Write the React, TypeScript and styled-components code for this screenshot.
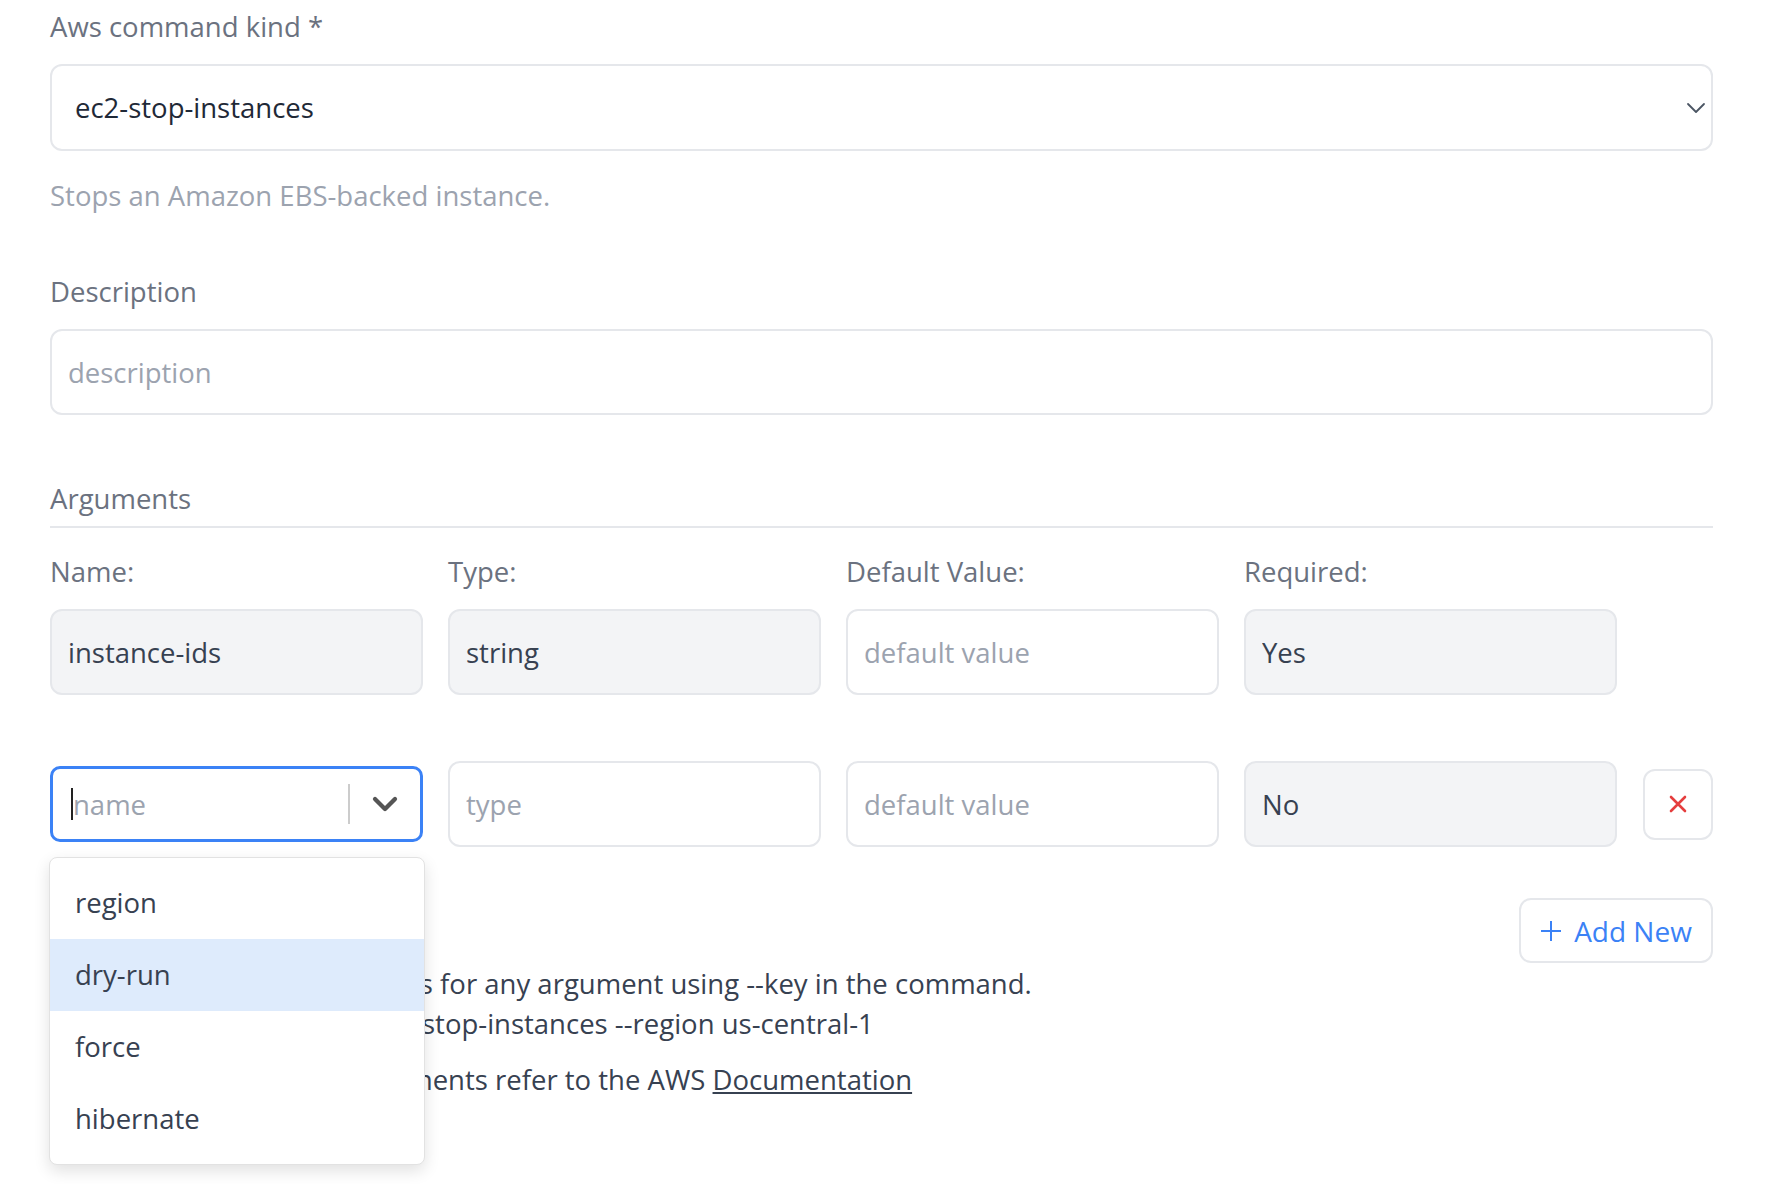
import React from "react";
import styled, { createGlobalStyle } from "styled-components";

const GlobalStyle = createGlobalStyle`
  html, body {
    margin: 0;
    background: #ffffff;
    font-family: "Open Sans", Lato, sans-serif;
  }
`;

const Page = styled.div`
  width: 1713px;
  min-height: 1184px;
  box-sizing: border-box;
  padding: 9px 0 0 50px;
  color: #374151;
  font-size: 27.5px;
`;

const Label = styled.div`
  height: 36px;
  line-height: 36px;
  color: #6b7280;
  font-size: 27.5px;
`;

const Field = styled.div`
  display: flex;
  flex-direction: column;
  gap: 19px;
`;

const SelectBox = styled.div`
  height: 87px;
  box-sizing: border-box;
  border: 2px solid #e5e7eb;
  border-radius: 12px;
  display: flex;
  align-items: center;
  justify-content: space-between;
  padding: 0 3px 0 23px;
  color: #1f2937;
`;

const Hint = styled.div`
  margin-top: 27px;
  height: 36px;
  line-height: 36px;
  color: #9ca3af;
`;

const TextInput = styled.input<{ $disabled?: boolean }>`
  width: 100%;
  height: 86px;
  box-sizing: border-box;
  border: 2px solid #e5e7eb;
  border-radius: 12px;
  padding: 0 16px;
  font-family: inherit;
  font-size: 27.5px;
  color: #374151;
  background: ${({ $disabled }) => ($disabled ? "#f3f4f6" : "#ffffff")};
  outline: none;
  &::placeholder {
    color: #9ca3af;
  }
`;

const Section = styled.div<{ $top?: number }>`
  margin-top: ${({ $top }) => $top ?? 60}px;
`;

const SectionHead = styled.div`
  height: 36px;
  line-height: 36px;
  color: #6b7280;
  padding-bottom: 9px;
  border-bottom: 2px solid #e5e7eb;
`;

const ArgGrid = styled.div`
  margin-top: 26px;
  display: grid;
  grid-template-columns: repeat(4, 373px) 1fr;
  column-gap: 25px;
  row-gap: 19px;
  align-items: center;
`;

const RowGap = styled.div`
  grid-column: 1 / -1;
  height: 28px;
`;

const NameCell = styled.div`
  position: relative;
  height: 86px;
  display: flex;
  align-items: center;
`;

const NameSelect = styled.div`
  width: 100%;
  height: 76px;
  box-sizing: border-box;
  border: 3px solid #3b82f6;
  border-radius: 10px;
  display: flex;
  align-items: center;
  padding-left: 18px;
`;

const Caret = styled.span`
  width: 2px;
  height: 32px;
  background: #222;
`;

const Placeholder = styled.span`
  flex: 1;
  color: #9ca3af;
`;

const Divider = styled.span`
  width: 2px;
  height: 40px;
  background: #cccccc;
`;

const Indicator = styled.span`
  width: 70px;
  display: flex;
  justify-content: center;
  align-items: center;
`;

const Menu = styled.div`
  position: absolute;
  top: 96px;
  left: -1px;
  width: 376px;
  box-sizing: border-box;
  padding: 9px 0;
  background: #ffffff;
  border: 1px solid #e2e2e2;
  border-radius: 8px;
  box-shadow: 0 6px 16px rgba(0, 0, 0, 0.12);
  z-index: 5;
`;

const MenuItem = styled.div<{ $active?: boolean }>`
  height: 72px;
  line-height: 72px;
  padding-left: 25px;
  color: #374151;
  background: ${({ $active }) => ($active ? "#deebfc" : "transparent")};
`;

const DeleteButton = styled.button`
  justify-self: end;
  width: 70px;
  height: 71px;
  box-sizing: border-box;
  border: 2px solid #e5e7eb;
  border-radius: 12px;
  background: #ffffff;
  display: flex;
  align-items: center;
  justify-content: center;
  padding: 0;
`;

const Actions = styled.div`
  margin-top: 51px;
  display: flex;
  justify-content: flex-end;
`;

const AddButton = styled.button`
  height: 65px;
  width: 194px;
  box-sizing: border-box;
  border: 2px solid #e5e7eb;
  border-radius: 12px;
  background: #ffffff;
  color: #3b82f6;
  font-family: inherit;
  font-size: 28px;
  display: flex;
  align-items: center;
  justify-content: center;
  gap: 12px;
`;

const Notes = styled.div`
  margin-top: 1px;
  line-height: 40px;
  color: #374151;
  white-space: nowrap;
  p {
    margin: 0 0 16px;
  }
  a {
    color: #374151;
    text-decoration: underline;
  }
`;

const Chevron = ({ size, stroke, color }: { size: number; stroke: number; color: string }) => (
  <svg width={size} height={size} viewBox="0 0 24 24" fill="none">
    <path d="M4 8l8 8 8-8" stroke={color} strokeWidth={stroke} strokeLinecap="round" strokeLinejoin="round" />
  </svg>
);

const App = () => {
  return (
    <Page>
      <GlobalStyle />
      <Field>
        <Label>Aws command kind *</Label>
        <SelectBox>
          <span>ec2-stop-instances</span>
          <Chevron size={24} stroke={1.8} color="#4b5563" />
        </SelectBox>
      </Field>
      <Hint>Stops an Amazon EBS-backed instance.</Hint>

      <Section>
        <Field>
          <Label>Description</Label>
          <TextInput placeholder="description" readOnly />
        </Field>
      </Section>

      <Section $top={66}>
        <SectionHead>Arguments</SectionHead>
        <ArgGrid>
          <Label>Name:</Label>
          <Label>Type:</Label>
          <Label>Default Value:</Label>
          <Label>Required:</Label>
          <span />

          <TextInput $disabled value="instance-ids" readOnly />
          <TextInput $disabled value="string" readOnly />
          <TextInput placeholder="default value" readOnly />
          <TextInput $disabled value="Yes" readOnly />
          <span />

          <RowGap />

          <NameCell>
            <NameSelect>
              <Caret />
              <Placeholder>name</Placeholder>
              <Divider />
              <Indicator>
                <Chevron size={30} stroke={3.4} color="#555555" />
              </Indicator>
            </NameSelect>
            <Menu>
              <MenuItem>region</MenuItem>
              <MenuItem $active>dry-run</MenuItem>
              <MenuItem>force</MenuItem>
              <MenuItem>hibernate</MenuItem>
            </Menu>
          </NameCell>
          <TextInput placeholder="type" readOnly />
          <TextInput placeholder="default value" readOnly />
          <TextInput $disabled value="No" readOnly />
          <DeleteButton>
            <svg width="18" height="18" viewBox="0 0 18 18">
              <path d="M2 2l14 14M16 2L2 16" stroke="#e53e3e" strokeWidth="2.6" strokeLinecap="round" />
            </svg>
          </DeleteButton>
        </ArgGrid>

        <Actions>
          <AddButton>
            <svg width="22" height="22" viewBox="0 0 22 22">
              <path d="M11 1v20M1 11h20" stroke="#3b82f6" strokeWidth="2" />
            </svg>
            Add New
          </AddButton>
        </Actions>

        <Notes>
          <p>
            You can specify default values for any argument using --key in the command.
            <br />
            For instance, to run: aws ec2 stop-instances --region us-central-1
          </p>
          <p>
            For more details about arguments refer to the AWS <a href="#">Documentation</a>
          </p>
        </Notes>
      </Section>
    </Page>
  );
};

export default App;
